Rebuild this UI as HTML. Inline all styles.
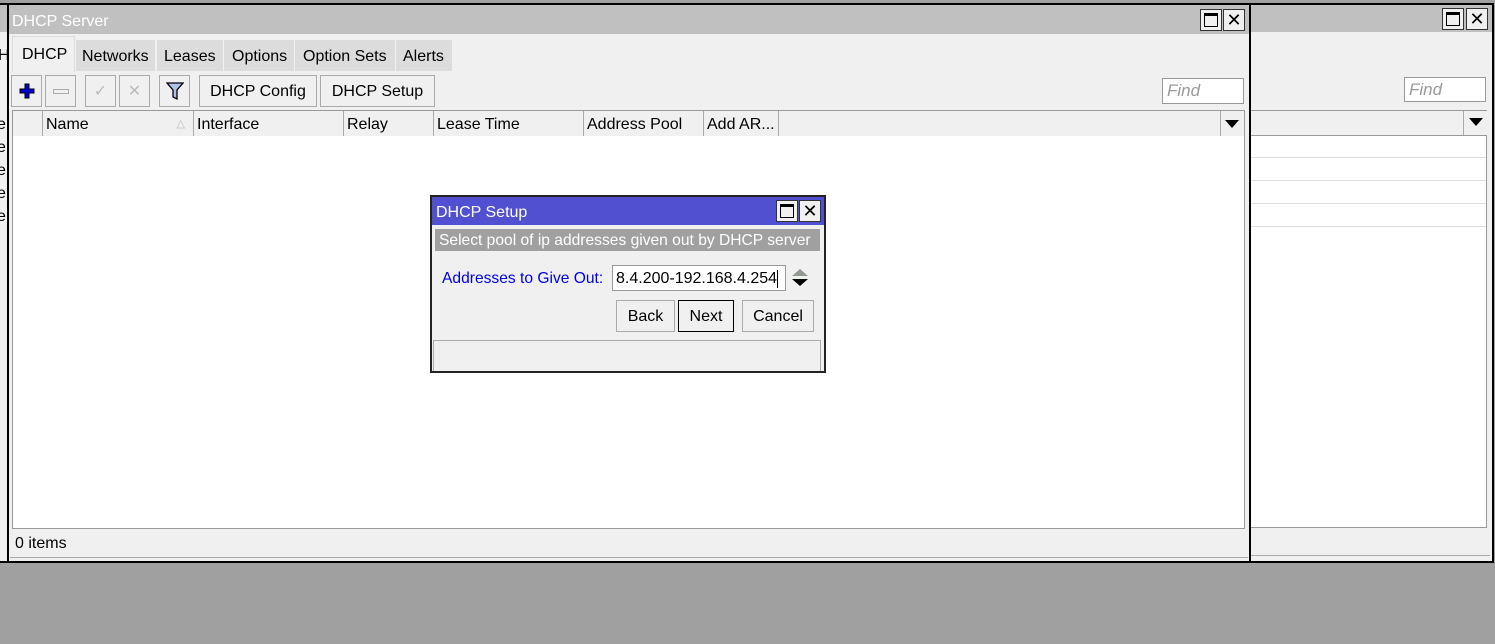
<!DOCTYPE html>
<html><head><meta charset="utf-8"><style>
*{box-sizing:border-box;margin:0;padding:0}
body{width:1495px;height:644px;background:#a0a0a0;position:relative;overflow:hidden;font-family:"Liberation Sans",sans-serif;font-size:16px;color:#000}
.a{position:absolute}
.win{background:#f0f0f0;border:2px solid #000}
.tb{background:#c0c0c0}
.wbtn{position:absolute;width:22px;height:22px;border:1px solid #333;background:#f0f0f0}
.btn{position:absolute;border:1px solid #aaa;background:#f0f0f0;text-align:center;line-height:32px}
.find{position:absolute;background:#fff;border:1px solid #999;color:#999;font-style:italic;font-size:17px;padding-left:4px;line-height:24px}
.hd{position:absolute;top:0;height:25px;border-right:1px solid #aaa;line-height:27px;padding-left:3px}
</style></head><body>
<!-- back window -->
<div class="a win" style="left:-2px;top:3px;width:1496px;height:560px"></div>
<div class="a tb" style="left:0;top:5px;width:1492px;height:27px"></div>
<div class="wbtn" style="left:1442px;top:8px"><div class="a" style="left:3px;top:3px;width:14px;height:14px;border:1px solid #000;border-top-width:3px"></div></div>
<div class="wbtn" style="left:1466px;top:8px;text-align:center;line-height:20px;font-size:18px">✕</div>
<div class="find" style="left:1404px;top:77px;width:82px;height:25px">Find</div>
<div class="a" style="left:1250px;top:110px;width:237px;height:26px;border-top:1px solid #999;border-bottom:1px solid #999;background:#f0f0f0"></div>
<div class="a" style="left:1463px;top:111px;width:1px;height:24px;background:#aaa"></div>
<div class="a" style="left:1469px;top:118px;width:0;height:0;border-left:7px solid transparent;border-right:7px solid transparent;border-top:8px solid #000"></div>
<div class="a" style="left:1250px;top:136px;width:237px;height:392px;background:#fff;border-right:1px solid #999;border-bottom:1px solid #999"></div>
<div class="a" style="left:1250px;top:157px;width:236px;height:1px;background:#ddd"></div>
<div class="a" style="left:1250px;top:180px;width:236px;height:1px;background:#ddd"></div>
<div class="a" style="left:1250px;top:203px;width:236px;height:1px;background:#ddd"></div>
<div class="a" style="left:1250px;top:226px;width:236px;height:1px;background:#ddd"></div>
<div class="a" style="left:1250px;top:555px;width:240px;height:2px;border-top:1px solid #aaa"></div>
<div class="a" style="left:-2px;top:47px">H</div>
<div class="a" style="left:-3px;top:116px">e</div>
<div class="a" style="left:-3px;top:139px">e</div>
<div class="a" style="left:-3px;top:162px">e</div>
<div class="a" style="left:-3px;top:185px">e</div>
<div class="a" style="left:-3px;top:208px">e</div>
<!-- front window -->
<div class="a win" style="left:7px;top:3px;width:1244px;height:560px"></div>
<div class="a tb" style="left:9px;top:5px;width:1240px;height:29px"></div>
<div class="a" style="left:12px;top:13px;color:#fff;font-size:16px">DHCP Server</div>
<div class="wbtn" style="left:1200px;top:9px"><div class="a" style="left:3px;top:3px;width:14px;height:14px;border:1px solid #000;border-top-width:3px"></div></div>
<div class="wbtn" style="left:1223px;top:9px;text-align:center;line-height:20px;font-size:18px">✕</div>
<!-- tabs -->
<div class="a" style="left:12px;top:36px;width:63px;height:36px;background:#f0f0f0;border:1px solid #ddd;border-bottom:none;padding:9px 0 0 9px">DHCP</div>
<div class="a" style="left:76px;top:40px;width:80px;height:31px;background:#dcdcdc;border-right:1px solid #f0f0f0;padding:8px 0 0 6px">Networks</div>
<div class="a" style="left:157px;top:40px;width:66px;height:31px;background:#dcdcdc;padding:8px 0 0 7px">Leases</div>
<div class="a" style="left:224px;top:40px;width:70px;height:31px;background:#dcdcdc;padding:8px 0 0 8px">Options</div>
<div class="a" style="left:295px;top:40px;width:100px;height:31px;background:#dcdcdc;padding:8px 0 0 8px">Option Sets</div>
<div class="a" style="left:396px;top:40px;width:56px;height:31px;background:#dcdcdc;padding:8px 0 0 7px">Alerts</div>
<!-- toolbar -->
<div class="btn" style="left:11px;top:75px;width:31px;height:32px"><svg width="16" height="16" style="margin-top:7px"><path d="M6 1h4v5h5v4h-5v5H6v-5H1V6h5z" fill="#0000d0" stroke="#000" stroke-width="1"/></svg></div>
<div class="btn" style="left:45px;top:75px;width:31px;height:32px"><div class="a" style="left:7px;top:13px;width:16px;height:5px;border:1px solid #aaa"></div></div>
<div class="btn" style="left:85px;top:75px;width:31px;height:32px;color:#bbb">✓</div>
<div class="btn" style="left:119px;top:75px;width:31px;height:32px;color:#bbb">✕</div>
<div class="btn" style="left:159px;top:75px;width:31px;height:32px"><svg width="18" height="20" style="margin-top:5px"><path d="M1 2h16l-6 7v9l-4-2V9z" fill="#b0c0e8" stroke="#000" stroke-width="1.3"/></svg></div>
<div class="btn" style="left:199px;top:75px;width:118px;height:32px">DHCP Config</div>
<div class="btn" style="left:320px;top:75px;width:115px;height:32px">DHCP Setup</div>
<div class="find" style="left:1162px;top:78px;width:82px;height:26px">Find</div>
<!-- table -->
<div class="a" style="left:12px;top:110px;width:1233px;height:27px;border:1px solid #999;background:#f0f0f0">
<div class="hd" style="left:0;width:30px"></div>
<div class="hd" style="left:30px;width:151px">Name<span style="position:absolute;right:8px;color:#bbb;font-size:11px">△</span></div>
<div class="hd" style="left:181px;width:150px">Interface</div>
<div class="hd" style="left:331px;width:90px">Relay</div>
<div class="hd" style="left:421px;width:150px">Lease Time</div>
<div class="hd" style="left:571px;width:120px">Address Pool</div>
<div class="hd" style="left:691px;width:75px">Add AR...</div>
<div class="hd" style="left:1207px;width:25px;border-right:none;border-left:1px solid #aaa"></div>
<div class="a" style="left:1212px;top:9px;width:0;height:0;border-left:7px solid transparent;border-right:7px solid transparent;border-top:8px solid #000"></div>
</div>
<div class="a" style="left:12px;top:136px;width:1233px;height:393px;background:#fff;border:1px solid #999;border-top:none"></div>
<div class="a" style="left:15px;top:535px">0 items</div>
<div class="a" style="left:10px;top:557px;width:1238px;height:1px;background:#aaa"></div>
<!-- dialog -->
<div class="a" style="left:430px;top:195px;width:396px;height:178px;border:2px solid #222;background:#f0f0f0"></div>
<div class="a" style="left:432px;top:197px;width:392px;height:28px;background:#5050d0"></div>
<div class="a" style="left:436px;top:204px;color:#fff">DHCP Setup</div>
<div class="wbtn" style="left:776px;top:200px"><div class="a" style="left:3px;top:3px;width:14px;height:14px;border:1px solid #000;border-top-width:3px"></div></div>
<div class="wbtn" style="left:799px;top:200px;text-align:center;line-height:20px;font-size:18px">✕</div>
<div class="a" style="left:435px;top:229px;width:385px;height:22px;background:#a0a0a0;color:#fff;padding-left:4px;line-height:24px;white-space:nowrap;overflow:hidden;font-size:15.6px">Select pool of ip addresses given out by DHCP server</div>
<div class="a" style="left:442px;top:270px;color:#0000e0;font-size:15.6px">Addresses to Give Out:</div>
<div class="a" style="left:612px;top:265px;width:174px;height:26px;background:#fff;border:1px solid #999;padding-left:3px;line-height:26px;white-space:nowrap;overflow:hidden">8.4.200-192.168.4.254<span style="display:inline-block;width:1px;height:18px;background:#000;vertical-align:middle"></span></div>
<div class="a" style="left:792px;top:269px;border-left:8px solid transparent;border-right:8px solid transparent;border-bottom:7px solid #909890"></div>
<div class="a" style="left:792px;top:279px;border-left:8px solid transparent;border-right:8px solid transparent;border-top:7px solid #000"></div>
<div class="btn" style="left:616px;top:300px;width:59px;height:32px">Back</div>
<div class="btn" style="left:678px;top:300px;width:56px;height:32px;border-color:#000">Next</div>
<div class="btn" style="left:742px;top:300px;width:72px;height:32px">Cancel</div>
<div class="a" style="left:433px;top:340px;width:388px;height:31px;border:1px solid #aaa;border-bottom:none"></div>
</body></html>
